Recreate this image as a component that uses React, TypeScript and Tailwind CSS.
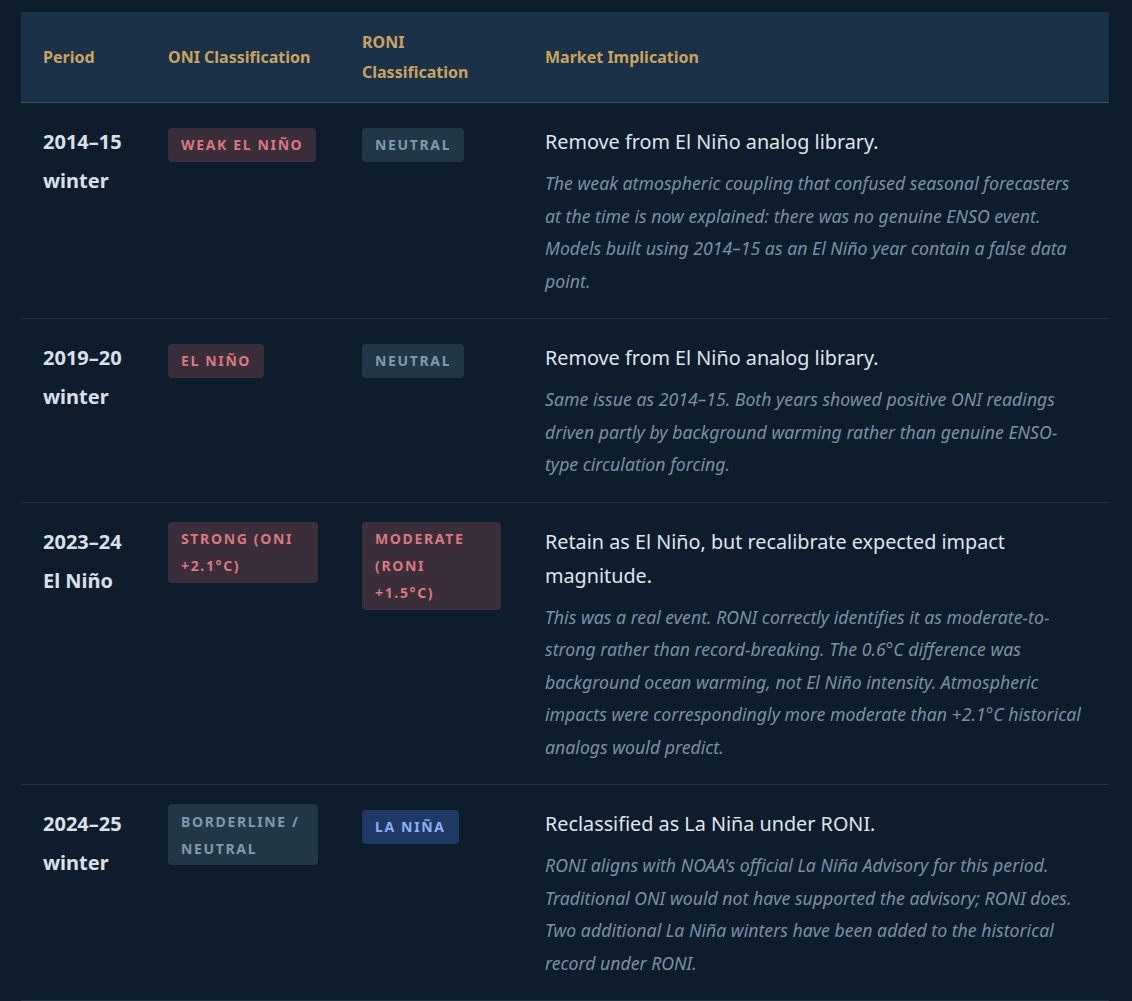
type Tone = 'warm' | 'neutral' | 'cool';

type Row = {
  period: string;
  oni: { label: string; tone: Tone };
  roni: { label: string; tone: Tone };
  title: string;
  note: string;
};

const rows: Row[] = [
  {
    period: '2014–15 winter',
    oni: { label: 'Weak El Niño', tone: 'warm' },
    roni: { label: 'Neutral', tone: 'neutral' },
    title: 'Remove from El Niño analog library.',
    note: 'The weak atmospheric coupling that confused seasonal forecasters at the time is now explained: there was no genuine ENSO event. Models built using 2014–15 as an El Niño year contain a false data point.',
  },
  {
    period: '2019–20 winter',
    oni: { label: 'El Niño', tone: 'warm' },
    roni: { label: 'Neutral', tone: 'neutral' },
    title: 'Remove from El Niño analog library.',
    note: 'Same issue as 2014–15. Both years showed positive ONI readings driven partly by background warming rather than genuine ENSO-type circulation forcing.',
  },
  {
    period: '2023–24 El Niño',
    oni: { label: 'Strong (ONI +2.1°C)', tone: 'warm' },
    roni: { label: 'Moderate (RONI +1.5°C)', tone: 'warm' },
    title: 'Retain as El Niño, but recalibrate expected impact magnitude.',
    note: 'This was a real event. RONI correctly identifies it as moderate-to-strong rather than record-breaking. The 0.6°C difference was background ocean warming, not El Niño intensity. Atmospheric impacts were correspondingly more moderate than +2.1°C historical analogs would predict.',
  },
  {
    period: '2024–25 winter',
    oni: { label: 'Borderline / Neutral', tone: 'neutral' },
    roni: { label: 'La Niña', tone: 'cool' },
    title: 'Reclassified as La Niña under RONI.',
    note: "RONI aligns with NOAA's official La Niña Advisory for this period. Traditional ONI would not have supported the advisory; RONI does. Two additional La Niña winters have been added to the historical record under RONI.",
  },
];

const toneClass: Record<Tone, string> = {
  warm: 'bg-[#3a2e3a] text-[#dc777f]',
  neutral: 'bg-[#223746] text-[#7e9aae]',
  cool: 'bg-[#1e3a64] text-[#8ab0f2]',
};

function Badge({ label, tone }: { label: string; tone: Tone }) {
  return (
    <span
      className={`inline-block rounded-[4px] px-[13px] py-[3.5px] align-baseline text-[14px] font-bold uppercase leading-[27px] tracking-[1.65px] ${toneClass[tone]}`}
    >
      {label}
    </span>
  );
}

export default function App() {
  return (
    <div
      className="min-h-screen bg-[#0e1d2b] pl-[21px] pr-[23px] pt-[12px]"
      style={{ fontFamily: '"Noto Sans", "Open Sans", sans-serif' }}
    >
      <table className="w-full table-fixed border-collapse text-left">
        <colgroup>
          <col className="w-[125px]" />
          <col className="w-[194px]" />
          <col className="w-[183px]" />
          <col />
        </colgroup>
        <thead>
          <tr className="border-b border-[#34506a] bg-[#1b3147] text-[16px] font-bold leading-[30px] text-[#c9a45e]">
            <th className="px-[22px] py-[15px] align-middle">Period</th>
            <th className="px-[22px] py-[15px] align-middle">ONI Classification</th>
            <th className="px-[22px] py-[15px] align-middle">RONI Classification</th>
            <th className="px-[22px] py-[15px] align-middle">Market Implication</th>
          </tr>
        </thead>
        <tbody>
          {rows.map((r) => (
            <tr key={r.period} className="border-b border-[#1f3345]">
              <td className="px-[22px] pb-[21px] pt-[19px] align-top text-[20px] font-bold leading-[39px] text-[#d9e0e7]">
                {r.period}
              </td>
              <td className="px-[22px] pb-[21px] pt-[19px] align-top text-[16px] leading-[44px]">
                <Badge {...r.oni} />
              </td>
              <td className="px-[22px] pb-[21px] pt-[19px] align-top text-[16px] leading-[44px]">
                <Badge {...r.roni} />
              </td>
              <td className="px-[22px] pb-[21px] pt-[19px] align-top">
                <p className="mt-[3px] text-[19.8px] leading-[34px] text-[#dfe5eb]">{r.title}</p>
                <p className="mt-[8px] text-[17.7px] italic leading-[32.5px] text-[#7891a6]">{r.note}</p>
              </td>
            </tr>
          ))}
        </tbody>
      </table>
    </div>
  );
}
